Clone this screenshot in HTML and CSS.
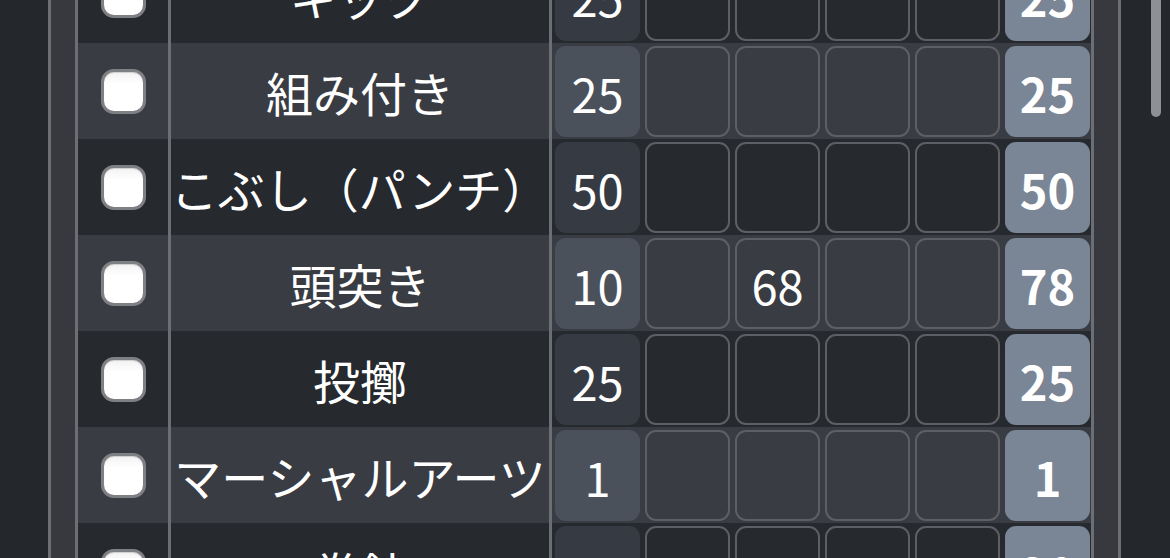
FILE: index.html
```html
<!DOCTYPE html>
<html lang="ja">
<head>
<meta charset="utf-8">
<title>技能表</title>
<link rel="stylesheet" href="styles.css">
</head>
<body>
<div class="gutter-left"></div>
<div class="frame">
  <div class="table">
    <div class="row dark">
      <div class="c-check"><input type="checkbox" class="cb"></div>
      <div class="c-name">キック</div>
      <div class="c-nums">
        <div class="cell base">25</div><div class="cell inp"></div><div class="cell inp"></div><div class="cell inp"></div><div class="cell inp"></div><div class="cell total">25</div>
      </div>
    </div>
    <div class="row light">
      <div class="c-check"><input type="checkbox" class="cb"></div>
      <div class="c-name">組み付き</div>
      <div class="c-nums">
        <div class="cell base">25</div><div class="cell inp"></div><div class="cell inp"></div><div class="cell inp"></div><div class="cell inp"></div><div class="cell total">25</div>
      </div>
    </div>
    <div class="row dark">
      <div class="c-check"><input type="checkbox" class="cb"></div>
      <div class="c-name">こぶし（パンチ）</div>
      <div class="c-nums">
        <div class="cell base">50</div><div class="cell inp"></div><div class="cell inp"></div><div class="cell inp"></div><div class="cell inp"></div><div class="cell total">50</div>
      </div>
    </div>
    <div class="row light">
      <div class="c-check"><input type="checkbox" class="cb"></div>
      <div class="c-name">頭突き</div>
      <div class="c-nums">
        <div class="cell base">10</div><div class="cell inp"></div><div class="cell inp">68</div><div class="cell inp"></div><div class="cell inp"></div><div class="cell total">78</div>
      </div>
    </div>
    <div class="row dark">
      <div class="c-check"><input type="checkbox" class="cb"></div>
      <div class="c-name">投擲</div>
      <div class="c-nums">
        <div class="cell base">25</div><div class="cell inp"></div><div class="cell inp"></div><div class="cell inp"></div><div class="cell inp"></div><div class="cell total">25</div>
      </div>
    </div>
    <div class="row light">
      <div class="c-check"><input type="checkbox" class="cb"></div>
      <div class="c-name">マーシャルアーツ</div>
      <div class="c-nums">
        <div class="cell base">1</div><div class="cell inp"></div><div class="cell inp"></div><div class="cell inp"></div><div class="cell inp"></div><div class="cell total">1</div>
      </div>
    </div>
    <div class="row dark">
      <div class="c-check"><input type="checkbox" class="cb"></div>
      <div class="c-name">拳銃</div>
      <div class="c-nums">
        <div class="cell base">20</div><div class="cell inp"></div><div class="cell inp"></div><div class="cell inp"></div><div class="cell inp"></div><div class="cell total">20</div>
      </div>
    </div>
  </div>
</div>
<div class="gutter-right"><div class="thumb"></div></div>
</body>
</html>
```
FILE: styles.css
```css
html, body {
  margin: 0;
  padding: 0;
}
body {
  width: 1170px;
  height: 558px;
  overflow: hidden;
  background: #24272c;
  display: flex;
  align-items: stretch;
  font-family: "Noto Sans CJK JP", "Noto Sans", sans-serif;
  color: #ffffff;
}
.gutter-left {
  width: 48px;
  flex: none;
}
.frame {
  flex: none;
  width: 1019px;
  border-left: 3px solid #6b6e73;
  border-right: 3px solid #6b6e73;
  background: #37393e;
  padding: 0 24px;
  display: flex;
}
.table {
  flex: none;
  width: 1013px;
  border-left: 3px solid #6b6e73;
  border-right: 3px solid #6b6e73;
  background: #26292e;
  display: flex;
  flex-direction: column;
  overflow: hidden;
}
.row {
  flex: none;
  height: 96px;
  display: flex;
}
.row:first-child {
  margin-top: -53px;
}
.row.dark { background: #26292e; }
.row.light { background: #393c42; }
.c-check {
  width: 90px;
  flex: none;
  display: flex;
  align-items: center;
  justify-content: center;
}
.cb {
  appearance: none;
  -webkit-appearance: none;
  margin: 0 0 0 1px;
  width: 45px;
  height: 45px;
  box-sizing: border-box;
  border: 3px solid #7f8084;
  border-radius: 13px;
  background: linear-gradient(#f2f2f2, #ffffff 30%);
  box-shadow: inset 0 1px 1px rgba(0,0,0,0.15);
}
.c-name {
  width: 378px;
  flex: none;
  border-left: 3px solid #6b6e73;
  border-right: 3px solid #6b6e73;
  display: flex;
  align-items: center;
  justify-content: center;
  font-size: 47px;
  line-height: 1;
  white-space: nowrap;
  padding-top: 0;
  box-sizing: content-box;
}
.c-nums {
  flex: 1;
  display: flex;
  gap: 5px;
  padding: 3px 1px 2px 3px;
}
.cell {
  width: 85px;
  height: 91px;
  box-sizing: border-box;
  border-radius: 11px;
  display: flex;
  align-items: center;
  justify-content: center;
  font-size: 47px;
  line-height: 1;
  padding-top: 2px;
}
.cell.base { background: #363b43; }
.row.light .cell.base { background: #4b515b; }
.cell.inp {
  border: 2.5px solid #5c5f64;
  border-radius: 11px;
  background: transparent;
}
.cell.total {
  background: #7a8595;
  font-weight: 700;
}
.gutter-right {
  flex: none;
  width: 49px;
  padding-left: 30px;
  box-sizing: border-box;
}
.thumb {
  width: 10px;
  height: 117px;
  background: #8e9094;
  border-radius: 0 0 5px 5px;
}
```
